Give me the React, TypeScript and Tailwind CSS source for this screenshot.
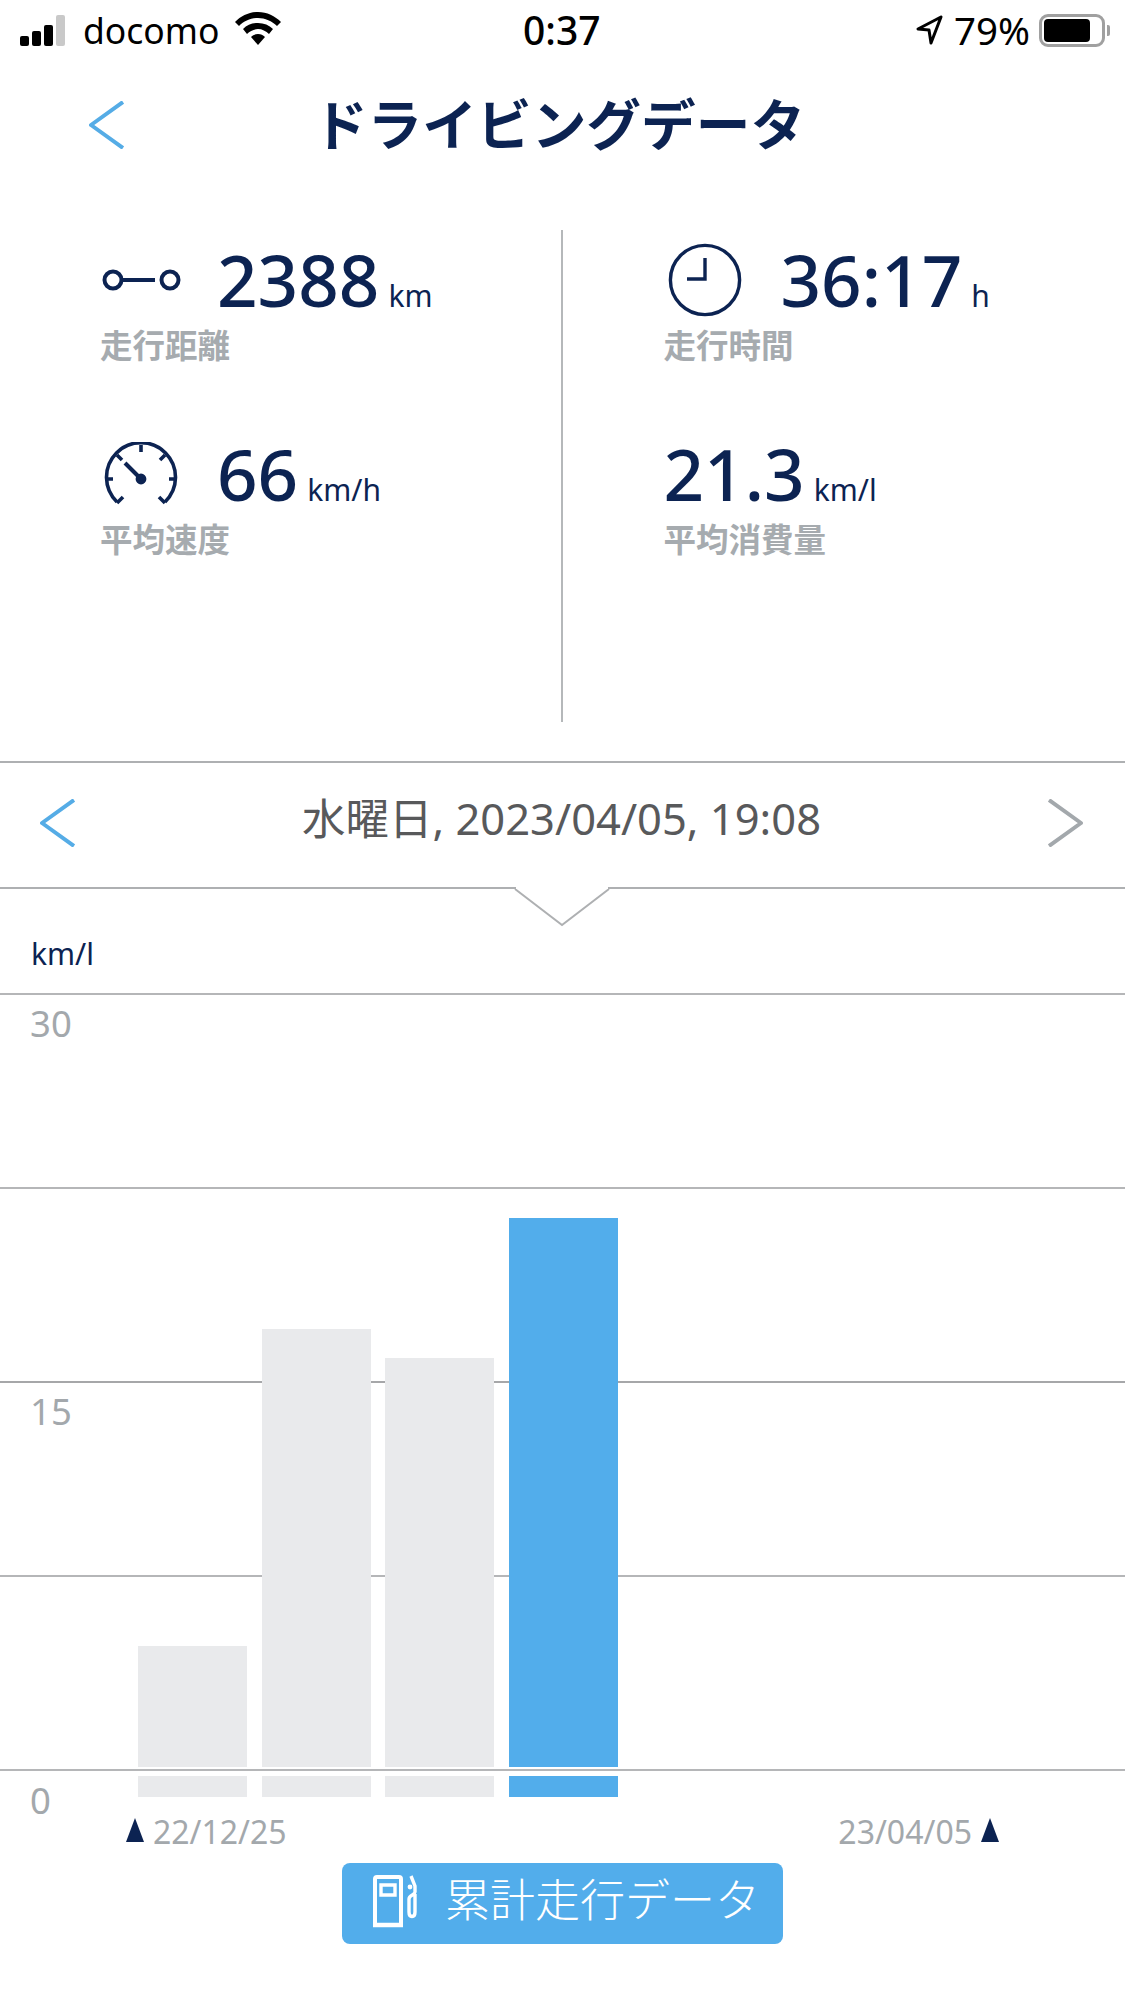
const navy = "#0c2352";

function Chevron({ dir, color }: { dir: "l" | "r"; color: string }) {
  return (
    <svg width="36" height="48" viewBox="0 0 36 48" fill="none" stroke={color} strokeWidth="4">
      <path d={dir === "l" ? "M35 1 L3 24 L35 47" : "M1 1 L33 24 L1 47"} strokeLinejoin="round" />
    </svg>
  );
}

function RouteIcon() {
  return (
    <svg className="ml-[2px]" width="80" height="30" viewBox="0 0 80 30" fill="none" stroke={navy} strokeWidth="4">
      <circle cx="11" cy="15" r="8.5" />
      <path d="M20 15 H53" />
      <circle cx="68" cy="15" r="8.5" />
    </svg>
  );
}

function GaugeIcon() {
  return (
    <svg className="ml-[4px]" width="74" height="64" viewBox="0 0 74 64" fill="none" stroke={navy} strokeWidth="3.6">
      <path d="M13 60 A34.5 34.5 0 1 1 61 60" />
      <path d="M37 3 V10 M13 13 L18 18 M61 13 L56 18 M2 37 H9 M65 37 H72 M13 61 L19 55 M61 61 L55 55" />
      <path d="M21 21 L36 36" strokeWidth="4" />
      <circle cx="37" cy="37" r="3.6" fill={navy} />
    </svg>
  );
}

function ClockIcon() {
  return (
    <svg className="ml-[4px]" width="74" height="74" viewBox="0 0 74 74" fill="none" stroke={navy} strokeWidth="3.4">
      <circle cx="37" cy="37" r="34.6" />
      <path d="M37 15 V36 H19" />
    </svg>
  );
}

function PumpIcon() {
  return (
    <svg className="mb-[5px]" width="46" height="54" viewBox="0 0 46 54" fill="none" stroke="#fff" strokeWidth="4">
      <path d="M4 50 V5 Q4 3 6 3 H28 Q30 3 30 5 V50" />
      <path d="M10 11 H24 V21 H10 Z" strokeWidth="3.4" />
      <path d="M2 51 H32" strokeWidth="4.5" />
      <path d="M40 2 L44 12 V18 C44 21 38 21 38 25 V38 C38 44 44 44 44 38 V20" strokeWidth="3.4" />
      <circle cx="39" cy="13" r="2.4" fill="#fff" stroke="none" />
    </svg>
  );
}

function Stat({ icon, value, unit, label, slot }: { icon?: React.ReactNode; value: string; unit: string; label: string; slot?: boolean }) {
  return (
    <div className="h-[194px]">
      <div className="flex h-[80px] items-baseline">
        {slot && <div className="flex h-[80px] w-[117px] items-center self-start">{icon}</div>}
        <span className="text-[71px] leading-[80px] font-medium text-[#0c2352]">{value}</span>
        <span className="ml-[9px] text-[30px] leading-[80px] text-[#0c2352]">{unit}</span>
      </div>
      <div className="mt-[6px] text-[32.5px] leading-[40px] font-bold text-[#a6abaf]">{label}</div>
    </div>
  );
}

function Bar({ h, color }: { h: number; color: string }) {
  return (
    <div className="flex w-[109px] flex-col">
      <div className={color} style={{ height: h }} />
      <div className={`mt-[9px] h-[21px] ${color}`} />
    </div>
  );
}

export default function App() {
  return (
    <div
      className="h-[2001px] w-[1125px] overflow-hidden bg-white"
      style={{ fontFamily: '"Noto Sans", "Noto Sans CJK JP", sans-serif' }}
    >
      {/* status bar */}
      <div className="relative flex h-[60px] items-center justify-between pr-[15px] pl-[20px] text-black">
        <div className="flex items-center">
          <div className="flex items-end gap-[3px]">
            <div className="h-[10px] w-[9px] rounded-[2px] bg-black" />
            <div className="h-[15px] w-[9px] rounded-[2px] bg-black" />
            <div className="h-[21px] w-[9px] rounded-[2px] bg-black" />
            <div className="h-[31px] w-[9px] rounded-[2px] bg-[#c9c9c9]" />
          </div>
          <span className="ml-[18px] text-[35.5px] leading-[40px]">docomo</span>
          <svg className="mb-[3px] ml-[14px]" width="48" height="34" viewBox="0 0 48 34">
            <path d="M24 0 C33 0 41 4 47 10 L43 14 C38 9 31 6 24 6 C17 6 10 9 5 14 L1 10 C7 4 15 0 24 0 Z" fill="#000" />
            <path d="M24 11 C30 11 35 13 39 17 L35 22 C32 19 28 17 24 17 C20 17 16 19 13 22 L9 17 C13 13 18 11 24 11 Z" fill="#000" />
            <path d="M24 22 C27 22 29 23 31 25 L24 33 L17 25 C19 23 21 22 24 22 Z" fill="#000" />
          </svg>
        </div>
        <span className="absolute left-[523px] text-[39px] leading-[40px] font-medium">0:37</span>
        <div className="flex items-center">
          <svg width="28" height="32" viewBox="0 0 28 32" fill="none" stroke="#000" strokeWidth="3">
            <path d="M26 3 L3 15 L14 16 L16 29 Z" strokeLinejoin="round" />
          </svg>
          <span className="ml-[11px] text-[38.5px] leading-[40px]">79%</span>
          <div className="ml-[9px] flex h-[33px] w-[66px] items-center rounded-[9px] border-[3px] border-[#a0a0a0] p-[2px]">
            <div className="h-full w-[46px] rounded-[4px] bg-black" />
          </div>
          <div className="ml-[2px] h-[11px] w-[3px] rounded-r-[2px] bg-[#a0a0a0]" />
        </div>
      </div>

      {/* title */}
      <div className="relative flex h-[130px] items-center justify-center pr-[7px]">
        <div className="absolute left-[88px] flex items-center">
          <Chevron dir="l" color="#55ace6" />
        </div>
        <h1 className="mb-[2px] text-[54.7px] leading-[70px] font-bold text-[#0c2352]">ドライビングデータ</h1>
      </div>

      {/* stats */}
      <div className="mt-[40px] grid h-[492px] grid-cols-2">
        <div className="border-r-2 border-[#b5b8ba] pt-[10px] pl-[100px]">
          <Stat slot icon={<RouteIcon />} value="2388" unit="km" label="走行距離" />
          <Stat slot icon={<GaugeIcon />} value="66" unit="km/h" label="平均速度" />
        </div>
        <div className="pt-[10px] pl-[101px]">
          <Stat slot icon={<ClockIcon />} value="36:17" unit="h" label="走行時間" />
          <Stat value="21.3" unit="km/l" label="平均消費量" />
        </div>
      </div>

      {/* date selector */}
      <div className="relative mt-[39px] flex h-[128px] items-center justify-between border-y-2 border-[#aeb0b2] pr-[41px] pl-[39px]">
        <div className="mb-[5px] flex"><Chevron dir="l" color="#55ace6" /></div>
        <span className="mb-[15px] text-[43.5px] leading-[56px] text-[#58595b]">水曜日, 2023/04/05, 19:08</span>
        <div className="mb-[5px] flex"><Chevron dir="r" color="#a3a8ac" /></div>
        <svg className="absolute top-[124px] left-[514px]" width="96" height="42" viewBox="0 0 96 42" fill="#fff" stroke="#aeb0b2" strokeWidth="2">
          <path d="M1 2 L48 38 L95 2" />
          <path d="M2 0.5 H94" stroke="#fff" strokeWidth="3" />
        </svg>
      </div>

      {/* unit */}
      <div className="flex h-[104px] items-end pb-[21px] pl-[31px]">
        <span className="text-[30px] leading-[36px] text-[#0c2352]">km/l</span>
      </div>

      {/* chart */}
      <div className="relative h-[806px]">
        <div className="h-[194px] border-t-2 border-[#b5b6b8]" />
        <div className="h-[194px] border-t-2 border-[#b5b6b8]" />
        <div className="h-[194px] border-t-2 border-[#a6a7a9]" />
        <div className="h-[194px] border-t-2 border-[#b5b6b8]" />
        <div className="h-[2px] bg-[#b5b6b8]" />

        <div className="absolute top-[8px] left-[30px] text-[36.5px] leading-[44px] text-[#a3a8ac]">30</div>
        <div className="absolute top-[396px] left-[30px] text-[36.5px] leading-[44px] text-[#a3a8ac]">15</div>
        <div className="absolute top-[785px] left-[30px] text-[36.5px] leading-[44px] text-[#a3a8ac]">0</div>

        <div className="absolute top-0 left-[138px] flex h-[804px] items-end gap-[14.67px]">
          <Bar h={121} color="bg-[#e9eaec]" />
          <Bar h={438} color="bg-[#e9eaec]" />
          <Bar h={409} color="bg-[#e9eaec]" />
          <Bar h={549} color="bg-[#52adeb]" />
        </div>
      </div>

      {/* date range */}
      <div className="mt-[13px] flex h-[40px] items-center justify-between pr-[126px] pl-[126px]">
        <div className="flex items-center">
          <svg className="mb-[5px]" width="18" height="24" viewBox="0 0 18 24"><path d="M9 0 L18 24 H0 Z" fill="#0c2352" /></svg>
          <span className="ml-[9px] text-[32px] leading-[40px] text-[#a3a8ac]">22/12/25</span>
        </div>
        <div className="flex items-center">
          <span className="mr-[9px] text-[32px] leading-[40px] text-[#a3a8ac]">23/04/05</span>
          <svg className="mb-[5px]" width="18" height="24" viewBox="0 0 18 24"><path d="M9 0 L18 24 H0 Z" fill="#0c2352" /></svg>
        </div>
      </div>

      {/* button */}
      <div className="mt-[11px] flex justify-center">
        <div className="flex h-[81px] w-[441px] items-center rounded-[8px] bg-[#52adeb] pl-[29px]">
          <PumpIcon />
          <span className="mb-[8px] ml-[28px] text-[45px] leading-[56px] font-light text-white">累計走行データ</span>
        </div>
      </div>
    </div>
  );
}
